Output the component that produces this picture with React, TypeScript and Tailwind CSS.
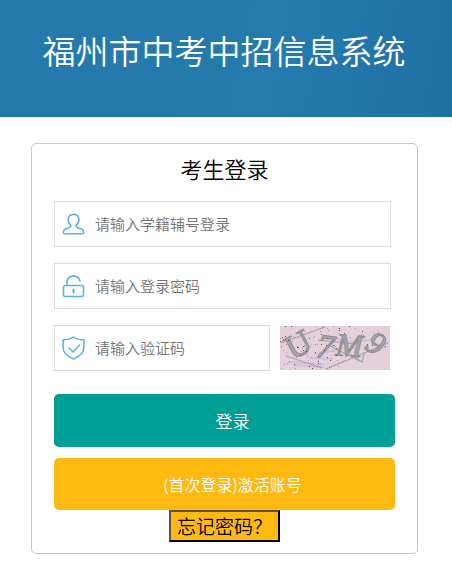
import type { ReactNode } from 'react';

interface FieldProps {
    id: string;
    label: string;
    type?: string;
    icon: ReactNode;
}

const iconProps = {
    viewBox: '0 0 24 24',
    fill: 'none',
    stroke: '#5db2de',
    strokeWidth: 1.6,
    strokeLinecap: 'round',
    strokeLinejoin: 'round',
    className: 'h-6 w-6 shrink-0',
    'aria-hidden': true,
} as const;

function UserIcon() {
    return (
        <svg {...iconProps}>
            <path d="M11.5 2.4c-3.3 0-5.4 2.2-5.4 5.2 0 2.4 1.1 4.4 2.8 5.7.2 1.5-.4 2.1-1.6 2.5l-3.7 1.2C2 17.6 1.4 18.7 1.4 20.2v.6c0 .6.4 1 1 1h18.2c.6 0 1-.4 1-1v-.6c0-1.5-.6-2.6-2.2-3.2l-3.7-1.2c-1.2-.4-1.8-1-1.6-2.5 1.7-1.3 2.8-3.3 2.8-5.7 0-3-2.1-5.2-5.4-5.2z" />
        </svg>
    );
}

function LockIcon() {
    return (
        <svg {...iconProps}>
            <rect x="1.5" y="11.5" width="20" height="11" rx="2" />
            <path d="M5 11.5v-4a6.7 6.7 0 0 1 13-.5" />
            <path d="M11.5 15.5v3" strokeWidth="2" />
        </svg>
    );
}

function ShieldIcon() {
    return (
        <svg {...iconProps}>
            <path d="M11.5 1c2.5 2 5.6 2.7 10.4 2.9v7.6c0 5.2-4.4 9-10.4 11.5C5.5 20.5 1.1 16.7 1.1 11.5V3.9C5.9 3.7 9 3 11.5 1z" />
            <path d="M7 12l4 4 6.6-7" />
        </svg>
    );
}

function Field({ id, label, type = 'text', icon }: FieldProps) {
    return (
        <div className="flex h-[46px] w-full min-w-0 items-center gap-2 border border-[#dcdcdc] pl-[7px]">
            <label htmlFor={id} aria-label={label}>
                {icon}
            </label>
            <input
                id={id}
                type={type}
                placeholder={label}
                className="h-full w-full min-w-0 bg-transparent pb-0.5 pl-px text-[15px] text-gray-800 outline-none placeholder:text-[#757575]"
            />
        </div>
    );
}

// Noise dots scattered over the captcha
const dots = Array.from({ length: 110 }, (_, i) => ({
    x: i < 75 ? (i * 37 + 5) % 60 : (i * 29 + 7) % 110,
    y: i < 75 ? (i * i * 7 + i * 3) % 43 : (i * i * 5) % 26,
    fill: i % 3 === 0 ? '#5d5268' : '#a898ad',
}));

function Captcha() {
    return (
        <button type="button" aria-label="验证码" className="h-11 w-[110px] shrink-0 cursor-pointer bg-[#e3d0da]">
            <svg viewBox="0 0 110 44" className="block h-full w-full overflow-visible">
                <path d="M8 36l34 2M14 39l30 2M34 28l24-4M30 32l22 1M56 12l22 12M60 18l36-5" stroke="#cdbfda" strokeWidth="2" />
                <path d="M1 17L45 1M46 43L108 17M50 20l32 16M6 30l36 12M38 14l36 4M70 28l12 8 2-8" stroke="#a9a1aa" strokeWidth="1.2" fill="none" />
                <g
                    fill="#a9a9ac"
                    stroke="#929296"
                    strokeWidth="1.2"
                    fontSize="34"
                    className="font-['Liberation_Serif',serif]"
                >
                    <text x="6" y="30" transform="rotate(-28 18 19)">U</text>
                    <text x="37" y="32" fontStyle="italic" transform="rotate(8 45 20)">7</text>
                    <text x="56" y="30" fontSize="32" fontStyle="italic" transform="rotate(4 68 20)">M</text>
                    <text x="88" y="28" fontSize="32" fontStyle="italic" transform="rotate(32 96 17)">9</text>
                </g>
                {dots.map((dot, i) => (
                    <rect key={i} x={dot.x} y={dot.y} width="1" height="1" fill={dot.fill} />
                ))}
            </svg>
        </button>
    );
}

export default function App() {
    return (
        <div className="min-h-screen bg-white font-['Noto_Sans_CJK_SC',sans-serif] font-[350] text-black">
            {/* Banner */}
            <header className="flex h-[117px] items-center justify-center bg-[linear-gradient(100deg,#2578ab_0%,#257bad_60%,#2070a5_100%)] pr-1 pb-4">
                <h1 className="text-[33px] whitespace-nowrap text-white">福州市中考中招信息系统</h1>
            </header>

            {/* Login card */}
            <main className="pt-[26px] pr-[34px] pb-[26px] pl-[31px]">
                <form
                    className="rounded-[5px] border border-[#c8c8c8] px-[22px] pt-2 pb-[11px]"
                    onSubmit={(e) => e.preventDefault()}
                >
                    <h2 className="text-center text-[22px] leading-8">考生登录</h2>

                    <div className="mt-[17px] flex flex-col gap-4 pr-1">
                        <Field id="student" label="请输入学籍辅号登录" icon={<UserIcon />} />
                        <Field id="password" label="请输入登录密码" type="password" icon={<LockIcon />} />
                        <div className="flex items-center gap-2.5 pr-px">
                            <Field id="captcha" label="请输入验证码" icon={<ShieldIcon />} />
                            <Captcha />
                        </div>
                    </div>

                    <button
                        type="submit"
                        className="mt-[23px] block h-[53px] w-full rounded-[5px] bg-[#009f95] pl-4 text-[17px] text-white"
                    >
                        登录
                    </button>
                    <button
                        type="button"
                        className="mt-[11px] block h-[52px] w-full rounded-[5px] bg-[#ffb90f] pl-4 text-[16px] text-white"
                    >
                        (首次登录)激活账号
                    </button>
                    <button
                        type="button"
                        className="mx-auto block h-8 border-2 border-t-[#555] border-r-black border-b-black border-l-[#555] bg-[#ffb90f] px-1.5 text-[19px] leading-7"
                    >
                        忘记密码？
                    </button>
                </form>
            </main>
        </div>
    );
}
